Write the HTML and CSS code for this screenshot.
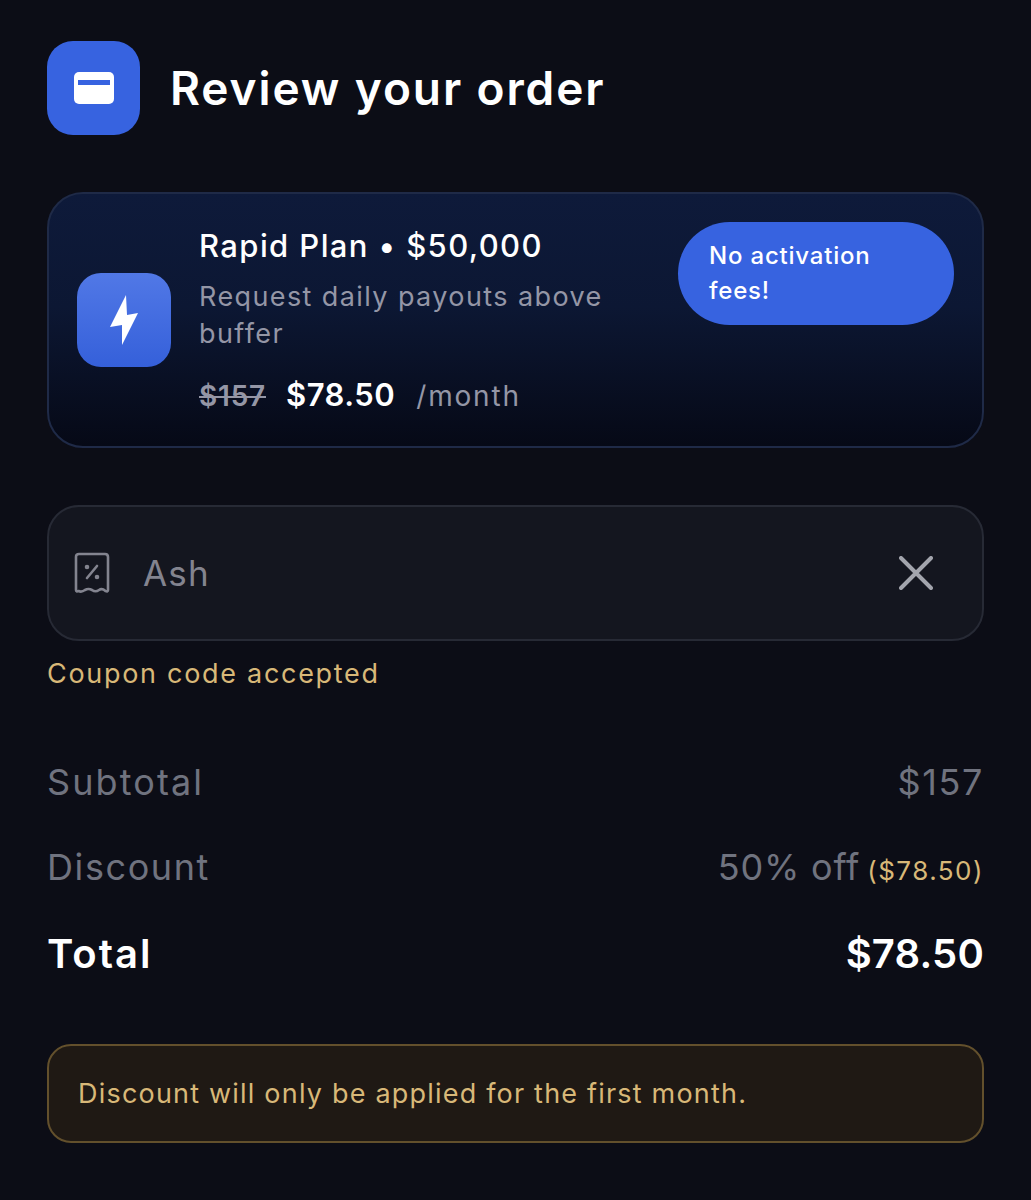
FILE: index.html
```html
<!DOCTYPE html>
<html lang="en">
<head>
    <meta charset="UTF-8">
    <meta name="viewport" content="width=device-width, initial-scale=1.0">
    <title>Review your order</title>
    <link rel="stylesheet" href="styles.css">
</head>
<body>
    <div class="page">
        <div class="header">
            <div class="header-icon">
                <svg width="40" height="32" viewBox="0 0 40 32">
                    <rect x="0" y="0" width="40" height="32" rx="5" fill="#fff"/>
                    <rect x="4" y="8" width="32" height="5" fill="#3763e0"/>
                </svg>
            </div>
            <h1>Review your order</h1>
        </div>

        <div class="plan-card">
            <div class="plan-icon">
                <svg width="30" height="50" viewBox="0 0 30 50">
                    <path d="M17 0 L1 32 L13 30 L13 50 L29 18 L18 20 Z" fill="#fff"/>
                </svg>
            </div>
            <div class="plan-info">
                <div class="plan-title">Rapid Plan • $50,000</div>
                <div class="plan-desc">Request daily payouts above buffer</div>
                <div class="plan-price">
                    <s>$157</s>
                    <strong>$78.50</strong>
                    <span>/month</span>
                </div>
            </div>
            <div class="plan-badge">No activation fees!</div>
        </div>

        <div class="coupon-input">
            <svg class="coupon-icon" width="36" height="42" viewBox="0 0 36 42" fill="none" stroke="#83848f" stroke-width="2.6" stroke-linecap="round" stroke-linejoin="round">
                <path d="M5 2 H31 Q34 2 34 5 V38 Q34 40 31.500 39 Q28 36 25 38 Q21.500 40.500 18 38 Q14.500 36 11 38 Q7.500 40.500 4.500 39 Q2 40 2 38 V5 Q2 2 5 2 Z"/>
                <path d="M23 14 L13 26"/>
                <circle cx="13" cy="15" r="1" fill="#83848f"/>
                <circle cx="23" cy="25" r="1" fill="#83848f"/>
            </svg>
            <span class="coupon-value">Ash</span>
            <svg class="coupon-clear" width="34" height="34" viewBox="0 0 34 34" fill="none" stroke="#a3a5ad" stroke-width="4" stroke-linecap="round">
                <path d="M2 2 L32 32 M32 2 L2 32"/>
            </svg>
        </div>
        <div class="coupon-msg">Coupon code accepted</div>

        <div class="summary">
            <div class="summary-row">
                <span class="subtotal-label">Subtotal</span>
                <span>$157</span>
            </div>
            <div class="summary-row">
                <span>Discount</span>
                <span class="discount-value">50% off <em>($78.50)</em></span>
            </div>
            <div class="summary-row total">
                <span class="total-label">Total</span>
                <span>$78.50</span>
            </div>
        </div>

        <div class="notice">Discount will only be applied for the first month.</div>
    </div>
</body>
</html>
```

FILE: styles.css
```css
body, html {
    margin: 0;
    padding: 0;
    background-color: #0c0d16;
    color: #fff;
    font-family: 'Inter', 'Noto Sans', sans-serif;
}

.page {
    padding: 41px 47px 0 47px;
    height: 1159px;
    overflow: hidden;
}

.header {
    display: flex;
    align-items: center;
    gap: 30px;
}

.header-icon {
    width: 93px;
    height: 94px;
    border-radius: 26px;
    background-color: #3763e0;
    display: flex;
    align-items: center;
    justify-content: center;
}

.header h1 {
    margin: 0;
    font-size: 46px;
    font-weight: 600;
    letter-spacing: 1.9px;
}

.plan-card {
    display: flex;
    align-items: flex-start;
    margin-top: 57px;
    height: 256px;
    box-sizing: border-box;
    padding: 28px 28px 0 28px;
    border: 2px solid #1f2a47;
    border-radius: 36px;
    background: linear-gradient(to bottom, #0e1a3a 0%, #0c1733 45%, #060916 100%);
}

.plan-icon {
    flex: none;
    width: 94px;
    height: 94px;
    margin-top: 51px;
    border-radius: 24px;
    background: linear-gradient(to bottom, #5178e6, #3560da);
    display: flex;
    align-items: center;
    justify-content: center;
}

.plan-info {
    flex: 1;
    margin-left: 28px;
}

.plan-title {
    font-size: 31px;
    font-weight: 500;
    line-height: 48px;
    letter-spacing: 1.4px;
}

.plan-desc {
    width: 430px;
    margin-top: 8px;
    font-size: 27px;
    line-height: 37px;
    color: #9496a6;
    letter-spacing: 1.4px;
}

.plan-price {
    display: flex;
    align-items: baseline;
    margin-top: 23px;
    line-height: 40px;
}

.plan-price s {
    font-size: 28px;
    font-weight: 600;
    color: #9496a6;
    letter-spacing: 0.8px;
}

.plan-price strong {
    margin-left: 20px;
    font-size: 31px;
    font-weight: 600;
    letter-spacing: 0.5px;
}

.plan-price span {
    margin-left: 21px;
    font-size: 28px;
    color: #9496a6;
    letter-spacing: 1.8px;
}

.plan-badge {
    flex: none;
    box-sizing: border-box;
    width: 276px;
    height: 103px;
    padding: 16px 60px 0 31px;
    border-radius: 52px;
    background-color: #3763e0;
    font-size: 24px;
    font-weight: 500;
    line-height: 35px;
    letter-spacing: 0.8px;
}

.coupon-input {
    display: flex;
    align-items: center;
    margin-top: 57px;
    height: 136px;
    box-sizing: border-box;
    padding: 0 49px 0 25px;
    border: 2px solid #272a35;
    border-radius: 32px;
    background-color: #14161f;
}

.coupon-value {
    flex: 1;
    margin-left: 33px;
    font-size: 35px;
    color: #83848f;
    letter-spacing: 1.2px;
}

.coupon-msg {
    margin-top: 15px;
    font-size: 27px;
    line-height: 36px;
    color: #d8b878;
    letter-spacing: 1.7px;
}

.summary {
    margin-top: 65px;
}

.summary-row {
    display: flex;
    justify-content: space-between;
    align-items: baseline;
    height: 85px;
    font-size: 36px;
    line-height: 50px;
    color: #70737f;
    letter-spacing: 1.6px;
}

.subtotal-label {
    letter-spacing: 2.1px;
}

.discount-value {
    letter-spacing: 0.8px;
}

.summary-row em {
    margin-left: -4px;
    font-style: normal;
    font-size: 26px;
    color: #d8b878;
    letter-spacing: 1.5px;
}

.summary-row.total {
    font-size: 40px;
    font-weight: 600;
    color: #fff;
    margin-top: 2px;
    height: 87px;
    letter-spacing: 0.2px;
}

.summary-row .total-label {
    letter-spacing: 2px;
}

.notice {
    margin-top: 28px;
    height: 99px;
    box-sizing: border-box;
    padding: 0 29px;
    display: flex;
    align-items: center;
    border: 2px solid #63502c;
    border-radius: 24px;
    background-color: #1f1914;
    font-size: 27px;
    color: #d8b878;
    letter-spacing: 1.2px;
}
```
